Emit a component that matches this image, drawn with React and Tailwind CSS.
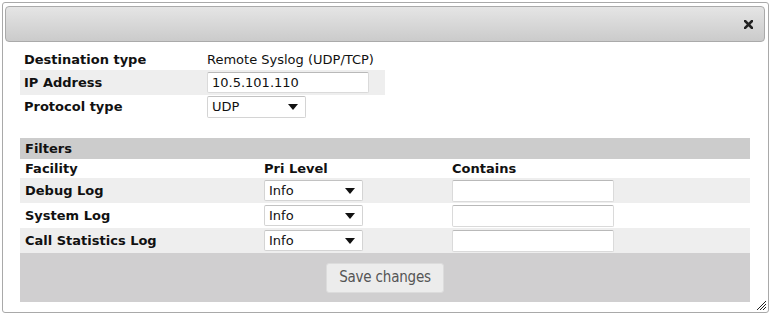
import React from 'react';

const font = { fontFamily: '"DejaVu Sans", Verdana, sans-serif' };
const btnFont = { fontFamily: '"DejaVu Sans Condensed", "DejaVu Sans", sans-serif' };

const Caret = () => (
    <svg width="10" height="6" viewBox="0 0 10 6" className="shrink-0">
        <path d="M0 0 L10 0 L5 6 Z" fill="#111" />
    </svg>
);

const FakeSelect = ({ value, className }) => (
    <div className={`flex items-center justify-between bg-white border border-[#d4d4d4] border-t-[#c2c2c2] rounded-[2px] pl-[4px] pr-[7px] text-[13px] text-[#111] ${className}`}>
        <span>{value}</span>
        <Caret />
    </div>
);

const TextBox = ({ value = '', className }) => (
    <div className={`flex items-center bg-white border border-[#dadada] border-t-[#b9b9b9] rounded-[2px] px-[4px] text-[13px] text-[#111] ${className}`}>
        {value}
    </div>
);

const filters = [
    { name: 'Debug Log', shade: true },
    { name: 'System Log', shade: false },
    { name: 'Call Statistics Log', shade: true },
];

const App = () => {
    return (
        <div className="w-[770px] h-[314px] bg-white pt-[2px] pl-[2px] pr-[1px] overflow-hidden" style={font}>
            <div className="relative h-[311px] border border-[#a9a9a9] rounded-[3px] bg-white pt-[3px] pl-[2px] pr-[3px]">
                {/* title bar */}
                <div className="h-[36px] border border-[#aaaaaa] rounded-[4px] bg-gradient-to-b from-[#e5e5e5] to-[#cbcbcb] flex items-center justify-end pr-[11px]">
                    <svg width="9" height="9" viewBox="0 0 9 9">
                        <path d="M1 1 L8 8 M8 1 L1 8" stroke="#222" strokeWidth="2.6" strokeLinecap="square" />
                    </svg>
                </div>

                <div className="pl-[15px] pr-[15px] pt-[8px]">
                    {/* destination settings */}
                    <div className="w-[365px] text-[13px] text-[#111]">
                        <div className="h-[20px] flex items-center">
                            <div className="w-[183px] pl-[4px] font-bold">Destination type</div>
                            <div className="pl-[4px]">Remote Syslog (UDP/TCP)</div>
                        </div>
                        <div className="h-[25px] flex items-center bg-[#eeeeee]">
                            <div className="w-[183px] pl-[4px] font-bold">IP Address</div>
                            <div className="pl-[4px]">
                                <TextBox value="10.5.101.110" className="w-[162px] h-[21px]" />
                            </div>
                        </div>
                        <div className="h-[24px] flex items-center">
                            <div className="w-[183px] pl-[4px] font-bold">Protocol type</div>
                            <div className="pl-[4px]">
                                <FakeSelect value="UDP" className="w-[99px] h-[22px]" />
                            </div>
                        </div>
                    </div>

                    {/* filters */}
                    <div className="mt-[19px] text-[13px] text-[#111]">
                        <div className="h-[21px] flex items-center bg-[#cccccc] pl-[5px] font-bold">Filters</div>
                        <div className="h-[19px] flex items-center font-bold">
                            <div className="w-[244px] pl-[5px]">Facility</div>
                            <div className="w-[188px]">Pri Level</div>
                            <div>Contains</div>
                        </div>
                        {filters.map((f) => (
                            <div key={f.name} className={`h-[25px] flex items-center ${f.shade ? 'bg-[#eeeeee]' : 'bg-white'}`}>
                                <div className="w-[244px] pl-[5px] font-bold">{f.name}</div>
                                <div className="w-[188px]">
                                    <FakeSelect value="Info" className="w-[99px] h-[21px]" />
                                </div>
                                <TextBox className="w-[162px] h-[22px]" />
                            </div>
                        ))}
                        <div className="h-[49px] bg-[#d0cfd0] flex items-center justify-center">
                            <button className="w-[118px] h-[30px] rounded-[3px] border border-[#dcdcdc] bg-[#ececec] text-[15px] text-[#555] tracking-[-0.2px]" style={btnFont}>
                                Save changes
                            </button>
                        </div>
                    </div>
                </div>

                {/* resize grip */}
                <svg className="absolute right-[1px] bottom-[1px]" width="11" height="11" viewBox="0 0 11 11">
                    <path d="M10 1 L1 10 M10 4 L4 10 M10 7 L7 10" stroke="#222" strokeWidth="1" />
                </svg>
            </div>
        </div>
    );
};

export default App;
